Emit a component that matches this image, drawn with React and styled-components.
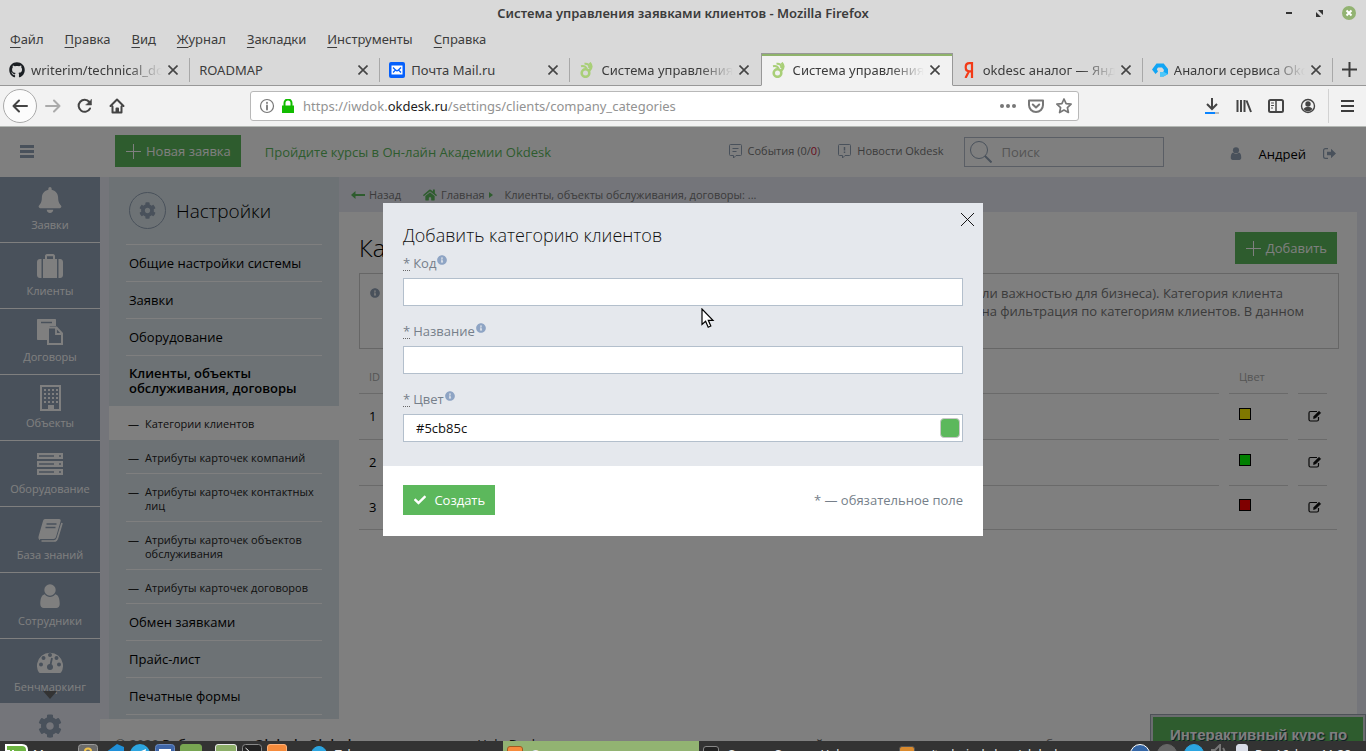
import React from "react";
import styled, { createGlobalStyle, css } from "styled-components";
import { FaBell, FaCheck, FaCog, FaGithub, FaHome, FaInfoCircle } from "react-icons/fa";

const GlobalStyle = createGlobalStyle`
  * { box-sizing: border-box; }
  body { margin: 0; overflow: hidden; }
  button, input { font: inherit; color: inherit; }
  button { border: 0; padding: 0; background: none; }
  a { color: inherit; text-decoration: none; }
  svg { display: block; flex: none; }
`;

const green = "#5cb85c";
const slate = "#92a2b6";
const haze = "#e8eaf4";
const appFont = `"Open Sans", "Noto Sans", sans-serif`;
const chromeFont = `"Noto Sans", "Open Sans", sans-serif`;

const Screen = styled.div`
  display: flex;
  flex-direction: column;
  height: 100vh;
  overflow: hidden;
  background: #fff;
`;

/* ---------- browser window ---------- */
const Chrome = styled.header`
  flex: none;
  background: #d9d9d9;
  color: #3c3c3c;
  font: 13px/20px ${chromeFont};
`;
const TitleBar = styled.div`
  display: flex;
  align-items: center;
  height: 26px;
  padding: 0 10px;
  font-weight: 600;
`;
const TitleSide = styled.div`
  display: flex;
  flex: 1;
  justify-content: flex-end;
  align-items: center;
  gap: 16px;
`;
const MenuBar = styled.nav`
  display: flex;
  gap: 21px;
  height: 27px;
  padding: 2px 10px 4px;
`;
const MenuItem = styled.button`
  line-height: 20px;
  &::first-letter { text-decoration: underline; text-underline-offset: 3px; }
`;
const TabStrip = styled.div`
  display: flex;
  height: 33px;
`;
const Tab = styled.div`
  display: flex;
  flex: 1;
  min-width: 0;
  align-items: center;
  gap: 6px;
  padding: 2px 12px 0 9px;
  position: relative;
  border-bottom: 1px solid #989898;
  &::after {
    content: "";
    width: 1px;
    height: 24px;
    background: #a8a8a8;
    position: absolute;
    right: 0;
    top: 5px;
  }
  ${(p) => p.$active && css`
    padding-top: 0;
    background: #f2f2f2;
    border: 1px solid #989898;
    border-bottom-color: #f2f2f2;
    box-shadow: inset 0 2px #8fb36b;
    &::after { display: none; }
  `}
  ${(p) => p.$plain && css`&::after { display: none; }`}
`;
const TabTitle = styled.span`
  flex: 1;
  overflow: hidden;
  white-space: nowrap;
  ${(p) => p.$fade && css`mask-image: linear-gradient(to right, #000 74%, transparent);`}
`;
const NewTab = styled.button`
  display: flex;
  align-items: center;
  justify-content: center;
  width: 33px;
  border-bottom: 1px solid #989898;
`;
const ToolBar = styled.div`
  display: flex;
  align-items: center;
  height: 41px;
  background: #f2f2f2;
  border-bottom: 1px solid #b4b8b4;
`;
const NavButtons = styled.div`
  display: flex;
  align-items: center;
  gap: 16px;
  width: 250px;
  padding-left: 3px;
`;
const BackButton = styled.button`
  display: flex;
  align-items: center;
  justify-content: center;
  width: 34px;
  height: 34px;
  margin-right: -8px;
  background: #fcfcfc;
  border: 1px solid #aaa;
  border-radius: 50%;
`;
const UrlBar = styled.div`
  display: flex;
  flex: 1;
  align-items: center;
  gap: 6px;
  height: 30px;
  padding: 0 6px 0 8px;
  background: #fff;
  border: 1px solid #b8b8b8;
  border-radius: 3px;
`;
const Url = styled.span`
  flex: 1;
  margin-left: 2px;
  color: #929292;
  b { font-weight: 400; color: #1c1c1c; }
`;
const UrlTools = styled.div`
  display: flex;
  align-items: center;
  gap: 12px;
`;
const ToolButtons = styled.div`
  display: flex;
  align-items: center;
  justify-content: flex-end;
  gap: 16px;
  width: 287px;
  padding-right: 12px;
`;
const Divider = styled.i`
  width: 1px;
  height: 34px;
  margin: 0 -4px;
  background: #d2d2d2;
`;

/* ---------- web page ---------- */
const Page = styled.div`
  position: relative;
  display: flex;
  flex: 1;
  flex-direction: column;
  min-height: 0;
  overflow: hidden;
  background: #fff;
  color: #000;
  font: 13px/18px ${appFont};
`;
const AppHeader = styled.header`
  display: flex;
  flex: none;
  align-items: center;
  height: 50px;
  padding: 0 30px 2px 20px;
`;
const Burger = styled.button`
  width: 95px;
  color: ${slate};
`;
const GreenButton = styled.button`
  display: flex;
  align-items: center;
  gap: 5px;
  height: ${(p) => (p.$small ? 30 : 32)}px;
  padding: 0 10px 0 11px;
  background: ${green};
  color: #fff;
`;
const CourseLink = styled.a`
  flex: 1;
  margin-left: 24px;
  padding-top: 2px;
  color: ${green};
`;
const HeaderLink = styled.a`
  display: flex;
  align-items: center;
  gap: 6px;
  margin-right: 18px;
  color: #777;
  font-size: 11px;
  em { font-style: normal; color: #d0103a; }
`;
const SearchBox = styled.label`
  display: flex;
  align-items: center;
  gap: 8px;
  width: 200px;
  height: 30px;
  margin: 2px 0 0 2px;
  padding: 0 5px;
  border: 1px solid #b4bccb;
  color: ${slate};
  input {
    width: 100%;
    border: 0;
    outline: 0;
    background: none;
  }
  input::placeholder { color: #aaa; }
`;
const UserLink = styled.a`
  display: flex;
  align-items: center;
  gap: 17px;
  margin: 5px 17px 0 66px;
  svg { color: ${slate}; }
`;
const LogoutLink = styled.a`
  margin-top: 5px;
  color: ${slate};
`;
const Body = styled.div`
  display: flex;
  flex: 1;
  min-height: 0;
`;
const SideNav = styled.nav`
  position: relative;
  display: flex;
  flex: none;
  flex-direction: column;
  width: 100px;
`;
const SideList = styled.div`
  position: relative;
  flex: 1;
  min-height: 0;
  overflow: hidden;
  background: ${slate};
`;
const SideItem = styled.a`
  display: flex;
  flex-direction: column;
  align-items: center;
  gap: 2px;
  height: ${(p) => (p.$active ? 38 : 66)}px;
  padding-top: 9px;
  overflow: hidden;
  border-bottom: ${(p) => (p.$active ? 0 : 1)}px solid #fff;
  background: ${(p) => (p.$active ? haze : slate)};
  color: ${(p) => (p.$active ? slate : "#fff")};
  font-size: 11px;
`;
const IconSlot = styled.span`
  display: flex;
  align-items: center;
  justify-content: center;
  height: 28px;
`;
const MoreMark = styled.svg`
  position: absolute;
  left: 43px;
  bottom: 4px;
`;
const Content = styled.div`
  display: flex;
  flex: 1;
  flex-direction: column;
  min-width: 0;
`;
const Workspace = styled.div`
  display: flex;
  flex: none;
  padding: 0 9px;
  background: ${haze};
`;
const SettingsPanel = styled.aside`
  width: 230px;
  padding-bottom: 4px;
  background: #dbe5ea;
`;
const SettingsHead = styled.div`
  display: flex;
  align-items: center;
  gap: 10px;
  height: 68px;
  margin: 0 17px;
  padding: 0 3px;
  border-bottom: 1px solid #fff;
  font-size: 19px;
  font-weight: 300;
`;
const CogRing = styled.span`
  display: flex;
  align-items: center;
  justify-content: center;
  width: 37px;
  height: 37px;
  border: 1px solid ${slate};
  border-radius: 50%;
  color: ${slate};
`;
const SettingsItem = styled.a`
  display: flex;
  align-items: center;
  height: 37px;
  margin: 0 17px;
  padding: 0 3px;
  border-bottom: 1px solid #fff;
  ${(p) => p.$open && css`
    height: 50px;
    border-bottom: 0;
    font-weight: 600;
    line-height: 15px;
  `}
`;
const SubItem = styled.a`
  display: flex;
  gap: 6px;
  height: ${(p) => (p.$tall ? 48 : 34)}px;
  margin: 0 17px;
  padding: 11px 2px 0;
  border-bottom: 1px solid #fff;
  color: #222;
  font-size: 11px;
  line-height: 14px;
  &::before { content: "—"; }
  ${(p) => p.$current && css`
    margin: 0;
    padding: 11px 19px 0;
    border: 0;
    background: #fff;
  `}
`;
const MainColumn = styled.div`
  display: flex;
  flex: 1;
  flex-direction: column;
  min-width: 0;
`;
const Crumbs = styled.nav`
  display: flex;
  align-items: center;
  height: 35px;
  padding: 0 12px;
  color: #777;
  font-size: 11px;
  svg { color: ${green}; }
`;
const Crumb = styled.a`
  display: flex;
  align-items: center;
  gap: 4px;
  margin-right: ${(p) => p.$gap || 0}px;
`;
const Main = styled.main`
  flex: 1;
  padding: 20px;
  background: #fff;
`;
const MainHead = styled.div`
  display: flex;
  align-items: center;
  justify-content: space-between;
  height: 32px;
`;
const PageTitle = styled.h1`
  margin: 0;
  font-size: 24px;
  font-weight: 300;
  line-height: 32px;
`;
const Note = styled.div`
  display: flex;
  justify-content: space-between;
  width: calc(100% + 2px);
  height: 76px;
  margin-top: 9px;
  padding: 10px 34px 0 10px;
  border: 1px solid #ccc;
  color: #777;
  svg { margin-top: 4px; color: ${slate}; }
`;
const NoteLine = styled.div`
  padding-right: ${(p) => (p.$short ? 21 : 0)}px;
  text-align: right;
  white-space: nowrap;
`;
const Grid = styled.table`
  width: 100%;
  margin-top: 11px;
  table-layout: fixed;
  border-collapse: collapse;
  border-bottom: 1px solid #d4d4d4;
  th, td { padding: 0 10px 0 0; }
  tr:last-child td > div { height: 44px; }
`;
const HeadCell = styled.div`
  height: 33px;
  padding: 0 10px;
  color: #aaa;
  font-size: 11px;
  font-weight: 400;
  line-height: 34px;
  text-align: left;
`;
const Cell = styled.div`
  display: flex;
  align-items: center;
  height: 46px;
  padding: 0 0 2px 10px;
  border-top: 1px solid #d4d4d4;
`;
const ColorDot = styled.span`
  width: 12px;
  height: 12px;
  margin-bottom: 4px;
  border: 1px solid #000;
  background: ${(p) => p.$color};
`;
const Footer = styled.footer`
  display: flex;
  padding: 15px 15px;
  color: #777;
  white-space: pre;
  line-height: 20px;
  b { color: #222; font-weight: 600; }
`;
const FooterPart = styled.span`
  width: ${(p) => p.$w}px;
  color: #222;
`;
const CourseWidget = styled.a`
  position: absolute;
  right: 1px;
  bottom: 0;
  width: 214px;
  height: 26px;
  padding: 8px 0 0 17px;
  overflow: hidden;
  border: 2px solid #d5d9de;
  border-bottom: 0;
  outline: 1px solid #9aa2ae;
  background: ${green};
  color: #fff;
  font: bold 15px/20px "Liberation Sans", Arial, sans-serif;
  text-shadow: 1px 1px 1px #14284a;
  white-space: nowrap;
`;

/* ---------- dialog ---------- */
const Backdrop = styled.div`
  position: absolute;
  inset: 0;
  display: flex;
  justify-content: center;
  align-items: flex-start;
  padding-top: 76px;
  background: rgba(0, 0, 0, 0.5);
`;
const Dialog = styled.form`
  position: relative;
  width: 600px;
  background: #fff;
  color: #767f8a;
`;
const DialogBody = styled.div`
  display: flex;
  flex-direction: column;
  gap: 15px;
  padding: 19px 20px 24px;
  background: #e5e8ed;
`;
const DialogTitle = styled.h2`
  margin: 0 0 -10px;
  color: #111;
  font-size: 18px;
  font-weight: 300;
  line-height: 26px;
`;
const CloseButton = styled.button`
  position: absolute;
  top: 9px;
  right: 8px;
  color: #000;
`;
const Field = styled.div`
  display: flex;
  flex-direction: column;
  gap: 5px;
`;
const FieldLabel = styled.label`
  display: flex;
  gap: 3px;
  height: 20px;
  line-height: 20px;
  svg { margin: 2px 0 0 -2px; color: #8ea4c4; }
`;
const Required = styled.abbr`
  height: 18px;
  border-bottom: 1px dotted #666;
  text-decoration: none;
`;
const InputFrame = styled.div`
  display: flex;
  align-items: center;
  height: 28px;
  padding-right: 2px;
  border: 1px solid #b3bfcc;
  background: #fff;
  input {
    flex: 1;
    height: 26px;
    padding: 0 12px;
    border: 0;
    outline: 0;
    background: none;
    color: #111;
  }
`;
const Swatch = styled.button`
  width: 20px;
  height: 20px;
  border: 1px solid #c8c8c8;
  border-radius: 4px;
  background: ${green};
`;
const DialogFooter = styled.div`
  display: flex;
  align-items: center;
  justify-content: space-between;
  height: 70px;
  padding: 0 20px 2px;
`;
const Pointer = styled.svg`
  position: absolute;
  left: 701px;
  top: 181px;
`;

/* ---------- desktop panel ---------- */
const TaskBar = styled.footer`
  display: flex;
  flex: none;
  height: 10px;
  overflow: hidden;
  background: #333;
  color: #e8e8e8;
  font: 12px/16px ${chromeFont};
  white-space: nowrap;
`;
const Launchers = styled.div`
  display: flex;
  gap: 5px;
  width: 307px;
  padding: 3px 0 0 5px;
`;
const MenuLabel = styled.span`
  width: 40px;
  padding-top: 3px;
`;
const Separator = styled.i`
  width: 3px;
`;
const TaskButton = styled.button`
  display: flex;
  flex: 1;
  align-items: flex-start;
  gap: 8px;
  height: 30px;
  padding: 5px 4px 0;
  overflow: hidden;
  background: ${(p) => (p.$active ? "#92b372" : "none")};
  span { padding-top: 1px; line-height: 16px; }
`;
const Tray = styled.div`
  display: flex;
  gap: 7px;
  width: 275px;
  padding: 3px 0 0 39px;
  span { padding-top: 3px; }
`;
const AppTile = styled.i`
  flex: none;
  width: ${(p) => p.$size || 20}px;
  height: ${(p) => p.$size || 20}px;
  border-radius: ${(p) => (p.$round ? "50%" : "3px")};
  border: 1px solid ${(p) => p.$edge || p.$color};
  background: ${(p) => p.$color};
`;

/* ---------- drawings ---------- */
const Cross = ({ s = 10, w = 2, color = "#444", crisp }) => (
  <svg width={s} height={s} viewBox="0 0 10 10" shapeRendering={crisp ? "crispEdges" : "auto"}><path d="M.5.5l9 9M9.5.5l-9 9" stroke={color} strokeWidth={w} fill="none" /></svg>
);
const Plus = ({ s = 15, w = 1 }) => (
  <svg width={s} height={s} viewBox="0 0 15 15"><path d="M7.5 0v15M0 7.5h15" stroke="currentColor" strokeWidth={w} /></svg>
);
const Bars = ({ w, h, t }) => (
  <svg width={w} height={h}><path d={`M0 ${t / 2}h${w}M0 ${h / 2}h${w}M0 ${h - t / 2}h${w}`} stroke="currentColor" strokeWidth={t} /></svg>
);
const OkMark = () => (
  <svg width="16" height="16" viewBox="0 0 16 16" fill="none" stroke="#a9cf78">
    <circle cx="6.5" cy="11" r="3.800" strokeWidth="2.600" />
    <path d="M2 4.200c2.500-.6 4.500 0 5.500 2.300M5.500 1.800c3-.6 5 1.200 4.800 4.200" strokeWidth="2" />
    <path d="M10.500.8c2.300 2.300 2.200 5.500-.6 8.400" strokeWidth="2.600" />
  </svg>
);
const Stroke = ({ s = 16, color = "#444", w = 2, children }) => (
  <svg width={s} height={s} viewBox="0 0 16 16" fill="none" stroke={color} strokeWidth={w} strokeLinecap="round" strokeLinejoin="round">{children}</svg>
);
const Person = ({ w = 20, h = 24 }) => (
  <svg width={w} height={h} viewBox="0 0 20 24" fill="currentColor">
    <circle cx="10" cy="6" r="5.700" />
    <path d="M4.800 10.300C6 12 8 13 10 13s4-1 5.200-2.700C18.500 11 19.700 15 19.700 20c0 2.500-1.500 4-3.500 4H3.800C1.800 24 .3 22.500.3 20c0-5 1.200-9 4.500-9.700z" />
  </svg>
);
const Suitcase = () => (
  <svg width="26" height="24" viewBox="0 0 26 24" fill="currentColor">
    <path d="M3 5h1.500v19H3c-1.700 0-3-1.300-3-3V8c0-1.700 1.300-3 3-3zM23 5h-1.500v19H23c1.700 0 3-1.300 3-3V8c0-1.700-1.300-3-3-3z" />
    <path fillRule="evenodd" d="M6 24V5h2V2c0-1 .8-2 2-2h6c1.200 0 2 1 2 2v3h2v19zM10 5h6V2.200h-6z" />
  </svg>
);
const Papers = () => (
  <svg width="26" height="26" viewBox="0 0 26 26">
    <path d="M1 0h17c.6 0 1 .4 1 1v6h-6l-3 4v10H1c-.6 0-1-.4-1-1V1c0-.6.4-1 1-1z" fill="currentColor" />
    <path d="M4 3.500h11" stroke={slate} strokeWidth="1.500" />
    <path d="M11 8.500h8.500l5.500 6V25H11z" fill={slate} stroke="currentColor" strokeWidth="2" />
    <path d="M19 8v7h6" fill="none" stroke="currentColor" strokeWidth="1.800" />
  </svg>
);
const Building = () => (
  <svg width="21" height="26" viewBox="0 0 21 26">
    <path d="M1 1h19v24H1z" fill="none" stroke="currentColor" strokeWidth="2" />
    <path d="M4 5h14M4 9h14M4 13h14M4 17h14" stroke="currentColor" strokeWidth="2" strokeDasharray="2 2" />
    <path d="M8 20h6v5H8z" fill="currentColor" />
  </svg>
);
const Racks = () => (
  <svg width="26" height="22" viewBox="0 0 26 22">
    <path d="M0 0h26v6H0zM0 8h26v6H0zM0 16h26v6H0z" fill="currentColor" />
    <path d="M2 3h15M2 11h15M2 19h15M22 3h2M22 11h2M22 19h2" stroke={slate} strokeWidth="1.500" />
  </svg>
);
const Book = () => (
  <svg width="25" height="23" viewBox="0 0 25 23">
    <path d="M7 0h14c1.500 0 2 1 1.600 2.300L18 18c-.4 1.300-1.300 2-2.600 2H3c-1 0-1.500.7-1 1.300-1-.6-2-2-1.400-4L5 2c.4-1.300 1-2 2-2z" fill="currentColor" />
    <path d="M8.500 5h10M7.500 8.500h10" stroke={slate} strokeWidth="1.500" />
    <path d="M24 4l-4.500 15c-.5 1.800-1.500 3-3.500 3H3.500" fill="none" stroke="currentColor" strokeWidth="1.700" />
  </svg>
);
const Gauge = () => (
  <svg width="26" height="22" viewBox="0 0 26 22">
    <path d="M3 22a1.500 1.500 0 0 1-1.200-.7A13 13 0 1 1 24.200 21.300a1.500 1.500 0 0 1-1.200.7z" fill="currentColor" />
    <g fill={slate}>
      <circle cx="13" cy="4" r="2" /><circle cx="6.500" cy="7" r="2" /><circle cx="19.500" cy="7" r="2" />
      <circle cx="4" cy="13.500" r="2" /><circle cx="22" cy="13.500" r="2" /><circle cx="13" cy="16" r="3" />
    </g>
    <path d="M13 16l2-9" stroke={slate} strokeWidth="1.800" />
  </svg>
);
const Chat = ({ children }) => (
  <svg width="13" height="15" viewBox="0 0 13 15" fill="none" stroke={slate}>
    <path d="M1.500.5h10q1 0 1 1v9q0 1-1 1H7l-2.500 2.500v-2.500h-3q-1 0-1-1v-9q0-1 1-1z" />{children}
  </svg>
);
const Edit = () => (
  <svg width="14" height="12" viewBox="0 0 14 12" fill="none" stroke="#111">
    <path d="M9 1.500H2.500q-1.500 0-1.500 1.500v6.500q0 1.500 1.500 1.500h6.500q1.500 0 1.500-1.500V7" strokeWidth="1.200" />
    <path d="M5.500 8.500l.4-2.200L11 1.200l1.700 1.700-5.100 5.100z" fill="#111" strokeWidth=".6" />
  </svg>
);

const tabs = [
  { title: "writerim/technical_docs", fade: true, icon: <FaGithub size={16} color="#1b1f23" /> },
  { title: "ROADMAP" },
  { title: "Почта Mail.ru", icon: (
    <svg width="16" height="16" viewBox="0 0 16 16"><rect width="16" height="16" rx="2" fill="#0560fb" /><path d="M2.500 3.500h11v9h-11z" fill="#fff" /><path d="M4 5.500l2.500 2.500L4 10.500M12 5.500L9.500 8l2.500 2.500M6 7.500l2 1.500 2-1.500" fill="none" stroke="#0560fb" strokeWidth="1.300" /></svg>) },
  { title: "Система управления заявками", fade: true, plain: true, icon: <OkMark /> },
  { title: "Система управления заявками", fade: true, active: true, icon: <OkMark /> },
  { title: "okdesc аналог — Яндекс", fade: true, icon: (
    <svg width="15" height="16" viewBox="0 0 15 16" fill="none" stroke="#f33a17" strokeWidth="2.200"><path d="M10 16V1.200H7.500C5 1.200 3.700 3 3.700 5.200S5 9.300 7.500 9.300H10M7 9.300L3.500 16" /></svg>) },
  { title: "Аналоги сервиса Okdesk", fade: true, icon: (
    <svg width="16" height="16" viewBox="0 0 16 16"><path d="M4.500 1.500h7.200L16 7v5l-4.500 2.500H8V10h3.300L12 8l-2-2.500H6L4.800 7.300 6 9.500 3.500 12 0 7.500z" fill="#12a5f4" /><path d="M8 10h4l3.800 2-4.300 2.500H8z" fill="#4cc7fa" /></svg>) },
];

const sections = [
  ["Заявки", <FaBell size={26} />],
  ["Клиенты", <Suitcase />],
  ["Договоры", <Papers />],
  ["Объекты", <Building />],
  ["Оборудование", <Racks />],
  ["База знаний", <Book />],
  ["Сотрудники", <Person />],
  ["Бенчмаркинг", <Gauge />],
];

const rows = [
  { id: 1, color: "#fff000" },
  { id: 2, color: "#00ff00" },
  { id: 3, color: "#ff0000" },
];

const fields = [
  { id: "code", label: "Код", value: "" },
  { id: "name", label: "Название", value: "" },
  { id: "color", label: "Цвет", value: "#5cb85c", swatch: true },
];

function BrowserChrome() {
  return (
    <Chrome>
      <TitleBar>
        <TitleSide />
        <span>Система управления заявками клиентов - Mozilla Firefox</span>
        <TitleSide>
          <svg width="14" height="14"><path d="M4 7h6" stroke="#333" strokeWidth="2" /></svg>
          <svg width="14" height="14"><path d="M6 4h5v5zM4 6v5h5z" fill="#333" /></svg>
          <svg width="14" height="14"><circle cx="7" cy="7" r="7" fill="#92b372" /><path d="M4.500 4.500l5 5M9.500 4.500l-5 5" stroke="#fff" strokeWidth="2" /></svg>
        </TitleSide>
      </TitleBar>
      <MenuBar>
        {["Файл", "Правка", "Вид", "Журнал", "Закладки", "Инструменты", "Справка"].map((m) => <MenuItem key={m}>{m}</MenuItem>)}
      </MenuBar>
      <TabStrip>
        {tabs.map((t, i) => (
          <Tab key={i} $active={t.active} $plain={t.plain}>
            {t.icon}
            <TabTitle $fade={t.fade}>{t.title}</TabTitle>
            <button type="button" aria-label="Закрыть вкладку"><Cross w={1.6} /></button>
          </Tab>
        ))}
        <NewTab aria-label="Новая вкладка"><Plus w={2} /></NewTab>
      </TabStrip>
      <ToolBar>
        <NavButtons>
          <BackButton aria-label="Назад"><Stroke><path d="M15 8H1.500M7 2.500L1.500 8 7 13.500" /></Stroke></BackButton>
          <button aria-label="Вперёд"><Stroke color="#aaa"><path d="M1 8h13.500M9 2.500L14.500 8 9 13.500" /></Stroke></button>
          <button aria-label="Обновить"><Stroke><path d="M13 10.500A6 6 0 1 1 12.300 4" /><path d="M14.500 1.500v5.500H9z" fill="#444" strokeWidth=".5" /></Stroke></button>
          <button aria-label="Домой"><Stroke><path d="M1.500 8L8 1.500 14.500 8M3.500 8.500v6h9v-6" /><path d="M7.500 14v-3.500h1.500V14" /></Stroke></button>
        </NavButtons>
        <UrlBar>
          <Stroke color="#777" w={1.2}><circle cx="8" cy="8" r="6.500" /><path d="M8 7.500v4M8 4.700v.3" strokeWidth="1.800" /></Stroke>
          <svg width="14" height="14" viewBox="0 0 14 14"><path d="M1 6.500h12V14H1z" fill="#12bc00" /><path d="M3.500 7V4a3.500 3.500 0 0 1 7 0v3" fill="none" stroke="#12bc00" strokeWidth="2" /></svg>
          <Url>https://iwdok.<b>okdesk.ru</b>/settings/clients/company_categories</Url>
          <UrlTools>
            <svg width="16" height="16" fill="#777"><circle cx="2" cy="8" r="2" /><circle cx="8" cy="8" r="2" /><circle cx="14" cy="8" r="2" /></svg>
            <Stroke color="#777"><path d="M1 2.500h14V7a7 7 0 0 1-14 0z" /><path d="M4.800 6.500L8 9.500l3.200-3" /></Stroke>
            <Stroke color="#777" w={1.7}><path d="M8 1l2.100 4.600 5 .6-3.700 3.400 1 4.900L8 12.100l-4.400 2.400 1-4.900L.9 6.200l5-.6z" /></Stroke>
          </UrlTools>
        </UrlBar>
        <ToolButtons>
          <svg width="16" height="16" viewBox="0 0 16 16" fill="none"><path d="M8 0v10.500M3 6l5 5 5-5" stroke="#444" strokeWidth="2" /><path d="M11 15h4" stroke="#bbb" strokeWidth="2" /><path d="M1 15h10" stroke="#0a84ff" strokeWidth="2" /></svg>
          <svg width="16" height="16" viewBox="0 0 16 16"><path d="M1.500 2v12M5 2v12M8.500 2v12M10.500 2.500L15 14" stroke="#444" strokeWidth="2" /></svg>
          <Stroke><rect x="1" y="2" width="14" height="12" rx="1.500" /><path d="M8 2v12" strokeWidth="1.500" /><path d="M3.500 5h2M3.500 7.500h2M3.500 10h1" strokeWidth="1" /></Stroke>
          <svg width="16" height="16" viewBox="0 0 16 16"><circle cx="8" cy="8" r="6.500" fill="none" stroke="#444" strokeWidth="1.400" /><circle cx="8" cy="6" r="2.700" fill="#444" /><path d="M3.500 11c1-1.800 3-2 4.500-2s3.500.2 4.500 2A5.500 5.500 0 0 1 8 13.500 5.500 5.500 0 0 1 3.500 11z" fill="#444" /></svg>
          <Divider />
          <Bars w={13} h={12} t={2} />
        </ToolButtons>
      </ToolBar>
    </Chrome>
  );
}

function Settings() {
  return (
    <SettingsPanel>
      <SettingsHead><CogRing><FaCog size={17} /></CogRing>Настройки</SettingsHead>
      <SettingsItem href="#">Общие настройки системы</SettingsItem>
      <SettingsItem href="#">Заявки</SettingsItem>
      <SettingsItem href="#">Оборудование</SettingsItem>
      <SettingsItem href="#" $open>Клиенты, объекты обслуживания, договоры</SettingsItem>
      <SubItem href="#" $current>Категории клиентов</SubItem>
      <SubItem href="#">Атрибуты карточек компаний</SubItem>
      <SubItem href="#" $tall>Атрибуты карточек контактных лиц</SubItem>
      <SubItem href="#" $tall>Атрибуты карточек объектов обслуживания</SubItem>
      <SubItem href="#">Атрибуты карточек договоров</SubItem>
      <SettingsItem href="#">Обмен заявками</SettingsItem>
      <SettingsItem href="#">Прайс-лист</SettingsItem>
      <SettingsItem href="#">Печатные формы</SettingsItem>
    </SettingsPanel>
  );
}

function AddCategoryDialog() {
  return (
    <Backdrop>
      <Dialog>
        <CloseButton type="button" aria-label="Закрыть"><Cross s={15} w={0.6} color="#000" crisp /></CloseButton>
        <DialogBody>
          <DialogTitle>Добавить категорию клиентов</DialogTitle>
          {fields.map((f) => (
            <Field key={f.id}>
              <FieldLabel htmlFor={f.id}><Required>*</Required>{f.label}<FaInfoCircle size={10} /></FieldLabel>
              <InputFrame>
                <input id={f.id} type="text" defaultValue={f.value} />
                {f.swatch && <Swatch type="button" aria-label="Выбрать цвет" />}
              </InputFrame>
            </Field>
          ))}
        </DialogBody>
        <DialogFooter>
          <GreenButton type="button" $small><FaCheck size={12} />&nbsp;Создать</GreenButton>
          <span>* — обязательное поле</span>
        </DialogFooter>
      </Dialog>
    </Backdrop>
  );
}

export default function App() {
  return (
    <Screen>
      <GlobalStyle />
      <BrowserChrome />
      <Page>
        <AppHeader>
          <Burger aria-label="Меню"><Bars w={14} h={13} t={3} /></Burger>
          <GreenButton><Plus />Новая заявка</GreenButton>
          <CourseLink href="#">Пройдите курсы в Он-лайн Академии Okdesk</CourseLink>
          <HeaderLink href="#"><Chat><path d="M3.500 4.500h6M3.500 7.500h4" /></Chat><span>События (0/<em>0</em>)</span></HeaderLink>
          <HeaderLink href="#"><Chat><path d="M6.500 3v3.500M6.500 7.500v1.500" strokeWidth="1.500" /></Chat>Новости Okdesk</HeaderLink>
          <SearchBox>
            <svg width="22" height="22" viewBox="0 0 22 22" fill="none" stroke="currentColor"><circle cx="9" cy="9" r="8.500" /><path d="M15 15l6.500 6.500" strokeWidth="2" /></svg>
            <input type="search" placeholder="Поиск" aria-label="Поиск" />
          </SearchBox>
          <UserLink href="#"><Person w={12} h={13} />Андрей</UserLink>
          <LogoutLink href="#" aria-label="Выйти">
            <svg width="13" height="11" viewBox="0 0 13 11"><path d="M5 .6H2.500Q.6.600.6 2.500v6q0 1.900 1.900 1.900H5" fill="none" stroke="currentColor" strokeWidth="1.200" /><path d="M4 3.700h4V.8l5 4.700-5 4.700V7.300H4z" fill="currentColor" /></svg>
          </LogoutLink>
        </AppHeader>
        <Body>
          <SideNav>
            <SideList>
              {sections.map(([name, icon]) => (
                <SideItem href="#" key={name}><IconSlot>{icon}</IconSlot>{name}</SideItem>
              ))}
              <MoreMark width="14" height="8"><path d="M0 0h14L7 8z" fill="#666" /></MoreMark>
            </SideList>
            <SideItem href="#" $active aria-label="Настройки"><IconSlot><FaCog size={24} /></IconSlot></SideItem>
          </SideNav>
          <Content>
            <Workspace>
              <Settings />
              <MainColumn>
                <Crumbs>
                  <Crumb href="#" $gap={22}>
                    <svg width="14" height="8" viewBox="0 0 14 8"><path d="M4.500 0v3H14v2H4.500v3L0 4z" fill="currentColor" /></svg>Назад
                  </Crumb>
                  <Crumb href="#" $gap={12}>
                    <FaHome size={14} />Главная
                    <svg width="4" height="6"><path d="M0 0l4 3-4 3z" fill="currentColor" /></svg>
                  </Crumb>
                  <Crumb href="#">Клиенты, объекты обслуживания, договоры: ...</Crumb>
                </Crumbs>
                <Main>
                  <MainHead>
                    <PageTitle>Категории клиентов</PageTitle>
                    <GreenButton><Plus />Добавить</GreenButton>
                  </MainHead>
                  <Note>
                    <FaInfoCircle size={10} />
                    <div>
                      <NoteLine $short>или важностью для бизнеса). Категория клиента</NoteLine>
                      <NoteLine>доступна фильтрация по категориям клиентов. В данном</NoteLine>
                    </div>
                  </Note>
                  <Grid>
                    <thead>
                      <tr>
                        <th><HeadCell>ID</HeadCell></th>
                        <th width="69"><HeadCell>Цвет</HeadCell></th>
                        <th width="39" aria-label="Действия" />
                      </tr>
                    </thead>
                    <tbody>
                      {rows.map((r) => (
                        <tr key={r.id}>
                          <td><Cell>{r.id}</Cell></td>
                          <td><Cell><ColorDot $color={r.color} /></Cell></td>
                          <td><Cell><a href="#" aria-label="Изменить"><Edit /></a></Cell></td>
                        </tr>
                      ))}
                    </tbody>
                  </Grid>
                </Main>
              </MainColumn>
            </Workspace>
            <Footer>
              <span>© 2020 </span>
              <FooterPart $w={92}><b>Работает на</b></FooterPart>
              <FooterPart $w={223}><b>Okdesk, Okdesk</b></FooterPart>
              <FooterPart $w={338}>Help Desk</FooterPart>
              <FooterPart $w={230}>й</FooterPart>
              <span>б</span>
            </Footer>
          </Content>
        </Body>
        <CourseWidget href="#">Интерактивный курс по</CourseWidget>
        <AddCategoryDialog />
        <Pointer width="14" height="21" viewBox="0 0 14 21"><path d="M1 1v15.500l3.600-3.300 2.600 6 2.600-1.200-2.500-5.700H12z" fill="#fff" stroke="#000" strokeWidth="1.200" /></Pointer>
      </Page>
      <TaskBar>
        <Launchers>
          <svg width="23" height="18"><path d="M0 0h17q6 0 6 6v12H0z" fill="#fff" /><path d="M2 2h15q4 0 4 4v12H5V6H2z" fill="#6db442" /><path d="M8 6v12M12 18v-8h3v8h3v-8" stroke="#fff" strokeWidth="2" fill="none" /></svg>
          <MenuLabel>Меню</MenuLabel>
          <svg width="20" height="20"><rect x=".5" y=".5" width="19" height="19" rx="3" fill="#6b6b6b" stroke="#999" /><path d="M7 9V7q0-2.500 3-2.500T13 7v2" fill="none" stroke="#f0c24a" strokeWidth="2" /></svg>
          <svg width="22" height="20"><path d="M14 0l7 3v17h-7V8L7 14 2 9z" fill="#1f8fd8" /></svg>
          <svg width="20" height="20"><circle cx="10" cy="10" r="10" fill="#2ca5e0" /><path d="M4 10l12-5-2 10-4-3z" fill="#fff" /></svg>
          <svg width="20" height="20"><rect x=".5" y=".5" width="19" height="19" rx="3" fill="#3f66a8" stroke="#6a8ac0" /><path d="M4 6h12M8 9h8" stroke="#fff" strokeWidth="2" /></svg>
          <AppTile $size={22} $color="#78a552" />
          <Separator />
          <AppTile $size={22} $color="#8cae68" $edge="#e8e8e8" />
          <svg width="20" height="20"><rect x=".5" y=".5" width="19" height="19" rx="3" fill="#222" stroke="#888" /><path d="M3.500 4l3 2.500-3 2.500" fill="none" stroke="#eee" /></svg>
          <AppTile $color="#f58b3c" $edge="#ffb27a" />
        </Launchers>
        <TaskButton><AppTile $size={16} $color="#2ca5e0" $round /><span>Telegram</span></TaskButton>
        <TaskButton $active><AppTile $size={16} $color="#f58b3c" $edge="#a05a20" /><span>Система управления</span></TaskButton>
        <TaskButton><AppTile $size={16} $color="#222" $edge="#888" /><span>Снимок Экрана Help</span></TaskButton>
        <TaskButton><AppTile $size={16} $color="#d98a2e" $edge="#555" /><span>~/technical_docs/okdesk</span></TaskButton>
        <Tray>
          <AppTile $color="#3465a4" $edge="#fff" $round />
          <AppTile $color="#666" $round />
          <AppTile $color="#2ca5e0" $round />
          <svg width="18" height="16"><path d="M0 6h4l5-5v14l-5-5H0zM12 4q3 4 0 8" fill="none" stroke="#777" strokeWidth="2" /></svg>
          <AppTile $size={12} $color="#d8dce6" />
          <span>Вс, 16 фев, 11:38</span>
        </Tray>
      </TaskBar>
    </Screen>
  );
}
